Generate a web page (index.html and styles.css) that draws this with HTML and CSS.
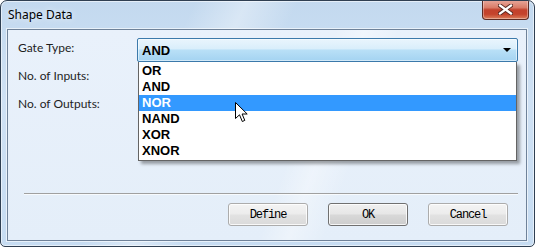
FILE: index.html
```html
<!DOCTYPE html>
<html lang="en">
<head>
  <meta charset="UTF-8"/>
  <title>Shape Data</title>
  <link rel="stylesheet" href="styles.css">
</head>
<body>
  <div class="window">
    <div class="titlebar">
      <span class="title">Shape Data</span>
      <button class="close" aria-label="Close">
        <svg width="15" height="11" viewBox="0 0 15 11">
          <path d="M2 1.5 L13 9.5 M13 1.5 L2 9.5" stroke="#5a2a22" stroke-width="4.2" stroke-linecap="square"/>
          <path d="M2 1.5 L13 9.5 M13 1.5 L2 9.5" stroke="#fff" stroke-width="2.2" stroke-linecap="square"/>
        </svg>
      </button>
    </div>

    <div class="client">
      <div class="form">
        <div class="row">
          <label class="label">Gate Type:</label>
          <div class="combo-wrap">
            <div class="combo">
              <span class="combo-value">AND</span>
              <span class="arrow"></span>
            </div>
            <ul class="dropdown">
              <li>OR</li>
              <li>AND</li>
              <li class="selected">NOR</li>
              <li>NAND</li>
              <li>XOR</li>
              <li>XNOR</li>
            </ul>
          </div>
        </div>
        <div class="row">
          <label class="label">No. of Inputs:</label>
        </div>
        <div class="row">
          <label class="label">No. of Outputs:</label>
        </div>
      </div>

      <div class="separator"></div>

      <div class="buttons">
        <button class="btn">Define</button>
        <button class="btn default">OK</button>
        <button class="btn">Cancel</button>
      </div>
    </div>
  </div>

  <svg class="cursor" width="14" height="22" viewBox="0 0 14 22">
    <path d="M0.5 0.5 L0.5 16.5 L4.5 12.8 L7.3 19.5 L9.8 18.4 L7.1 12 L12.2 12 Z" fill="#fff" stroke="#000" stroke-width="1"/>
  </svg>
</body>
</html>
```

FILE: styles.css
```css
body {
  margin: 0;
  width: 535px;
  height: 247px;
  overflow: hidden;
  background: #fff;
  font-family: 'Noto Sans', 'Open Sans', sans-serif;
  position: relative;
}

.window {
  box-sizing: border-box;
  width: 535px;
  height: 247px;
  border: 1px solid #2f3f52;
  border-radius: 7px 7px 5px 5px;
  display: flex;
  flex-direction: column;
  background:
    linear-gradient(115deg, rgba(255,255,255,0) 30%, rgba(255,255,255,0.35) 38%, rgba(255,255,255,0) 46%),
    linear-gradient(180deg, #c3d9ef 0%, #cfe1f4 40%, #c6dcf2 100%);
  box-shadow: inset 0 0 0 1px rgba(255,255,255,0.55);
  overflow: hidden;
}

.titlebar {
  height: 28px;
  display: flex;
  justify-content: space-between;
  align-items: flex-start;
  padding: 0 5px 0 7px;
}
.title {
  font-size: 12px;
  line-height: 28px;
  color: #000;
  text-shadow: 0 0 6px rgba(255,255,255,0.9);
}
.close {
  margin-top: -1px;
  width: 47px;
  height: 20px;
  border: 1px solid #5b2b24;
  border-top: none;
  border-radius: 0 0 4px 4px;
  background: linear-gradient(180deg, #e8a99d 0%, #d97c68 40%, #c2412c 52%, #c4432c 75%, #db7f5c 100%);
  box-shadow: inset 0 0 0 1px rgba(255,255,255,0.35);
  display: flex;
  align-items: center;
  justify-content: center;
  padding: 0;
}

.client {
  flex: 1;
  margin: 0 7px 5px 6px;
  border: 1px solid #6f8299;
  background:
    linear-gradient(110deg, rgba(255,255,255,0) 55%, rgba(255,255,255,0.35) 60%, rgba(255,255,255,0) 66%),
    linear-gradient(180deg, #e9f1fb 0%, #e4eef9 100%);
  display: flex;
  flex-direction: column;
  box-shadow: 0 0 0 1px rgba(255,255,255,0.6);
}

.form {
  flex: 1;
  padding: 7px 8px 0 10px;
}
.row {
  height: 28px;
  display: flex;
  align-items: flex-start;
}
.label {
  width: 119px;
  padding-top: 3px;
  line-height: 16px;
  font-family: Lato, 'Noto Sans', sans-serif;
  font-size: 12px;
  color: #1e1e1e;
}

.combo-wrap {
  position: relative;
  width: 381px;
  margin-top: 1px;
}
.combo {
  box-sizing: border-box;
  height: 24px;
  border: 1px solid #3c7aab;
  border-radius: 2px;
  background: linear-gradient(180deg, #e9f5fd 0%, #d9eefb 45%, #b9e0f7 50%, #a4d3f1 100%);
  box-shadow: inset 0 0 0 1px rgba(255,255,255,0.5);
  display: flex;
  align-items: center;
  justify-content: space-between;
  padding: 0 6px 0 4px;
}
.combo-value,
.dropdown li {
  font-family: 'Liberation Sans', Arial, sans-serif;
  font-weight: bold;
  font-size: 13px;
  color: #000;
}
.arrow {
  width: 0;
  height: 0;
  border-left: 4px solid transparent;
  border-right: 4px solid transparent;
  border-top: 4px solid #000;
}

.dropdown {
  position: absolute;
  top: 24px;
  left: 1px;
  right: 1px;
  margin: 0;
  padding: 1px 0 1px;
  list-style: none;
  background: #fff;
  border: 1px solid #646464;
  border-top: none;
  box-shadow: 3px 3px 3px rgba(0,0,0,0.35);
}
.dropdown li {
  height: 16px;
  line-height: 16px;
  padding-left: 3px;
}
.dropdown li.selected {
  background: #3399ff;
  color: #fff;
}

.separator {
  height: 1px;
  background: #a0a0a0;
  margin: 0 8px 0 16px;
  box-shadow: 0 1px 0 rgba(255,255,255,0.7);
}

.buttons {
  display: flex;
  justify-content: flex-end;
  gap: 20px;
  padding: 9px 18px 14px 0;
}
.btn {
  box-sizing: border-box;
  width: 80px;
  height: 23px;
  border: 1px solid #acacac;
  border-radius: 3px;
  background: linear-gradient(180deg, #f4f4f4 0%, #ececec 48%, #e2e2e2 52%, #dadada 100%);
  box-shadow: inset 0 0 0 1px rgba(255,255,255,0.8);
  font-family: 'Liberation Mono', 'Courier New', monospace;
  font-size: 12px;
  letter-spacing: -1.1px;
  color: #000;
  padding: 0;
}
.btn.default {
  border-color: #707070;
  background: linear-gradient(180deg, #f0f0f0 0%, #e6e6e6 48%, #d8d8d8 52%, #cdcdcd 100%);
}

.cursor {
  position: absolute;
  left: 235px;
  top: 102px;
}
```
